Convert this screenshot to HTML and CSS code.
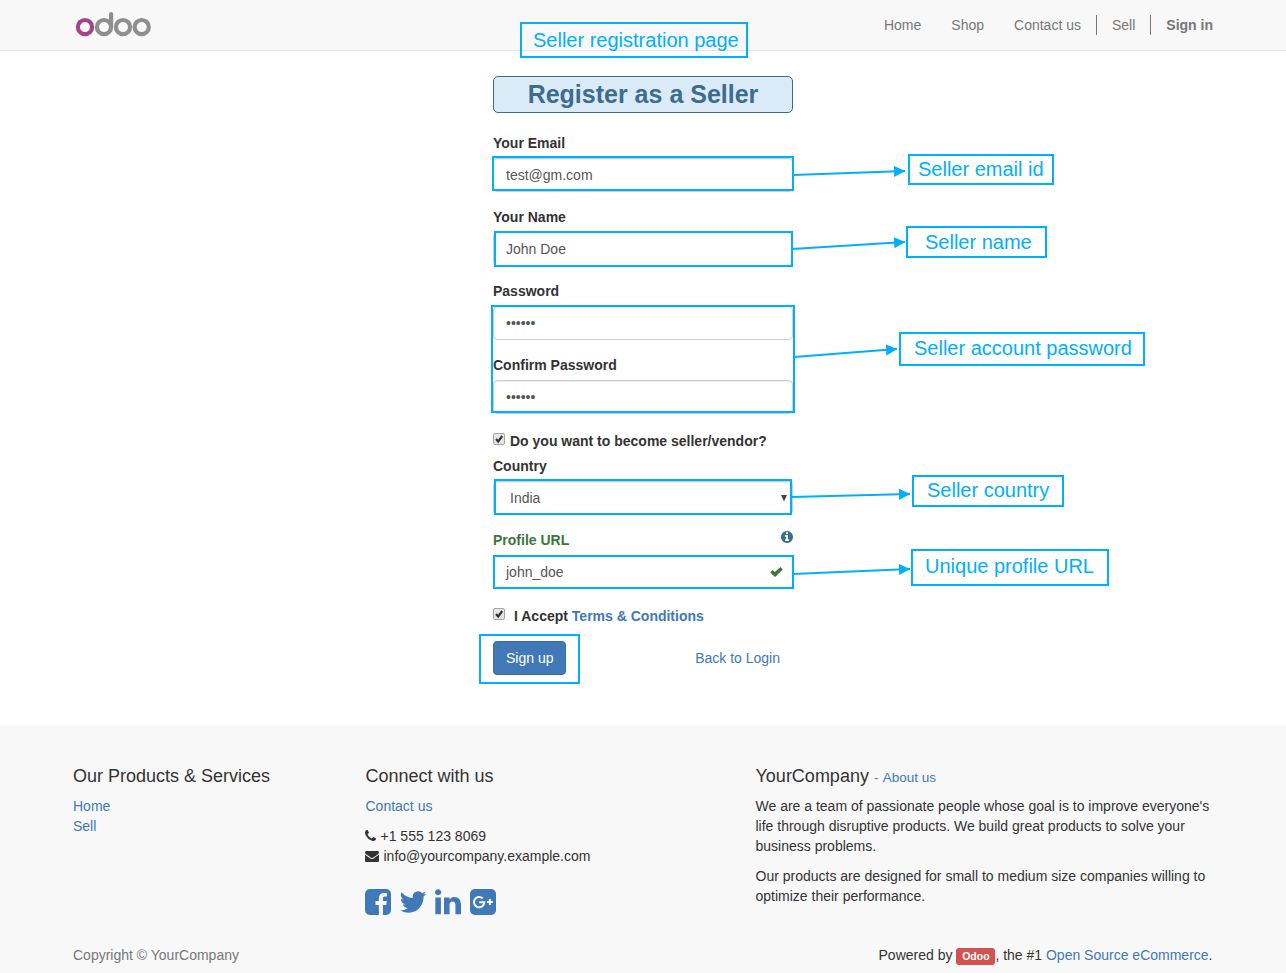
FILE: index.html
```html
<!DOCTYPE html>
<html lang="en">
<head>
<meta charset="utf-8">
<title>Register as a Seller</title>
<link rel="stylesheet" href="styles.css">
</head>
<body>
<header class="navbar">
  <div class="container navbar-inner">
    <a class="brand" href="#" aria-label="odoo">
      <svg width="80" height="30" viewBox="73 9 80 30" fill="none" stroke-width="4.2">
        <g stroke="#8f8f8f">
          <circle cx="104" cy="27.1" r="7.1"/>
          <path d="M111.1 14.1V27" stroke-linecap="round"/>
          <circle cx="123" cy="27.1" r="7.1"/>
          <circle cx="141.7" cy="27.1" r="7.1"/>
        </g>
        <circle cx="85" cy="27.1" r="7.1" stroke="#a24689"/>
      </svg>
    </a>
    <nav class="menu">
      <a href="#">Home</a>
      <a href="#">Shop</a>
      <a href="#">Contact us</a>
      <a class="divided" href="#">Sell</a>
      <a class="divided strong" href="#">Sign in</a>
    </nav>
  </div>
</header>

<main class="main">
  <form class="signup">
    <h1 class="title">Register as a Seller</h1>
    <div class="group"><label>Your Email</label><div class="control">test@gm.com</div></div>
    <div class="group"><label>Your Name</label><div class="control">John Doe</div></div>
    <div class="group"><label>Password</label><div class="control">••••••</div></div>
    <div class="group"><label>Confirm Password</label><div class="control">••••••</div></div>
    <div class="check seller">
      <svg class="box" viewBox="0 0 12 12"><rect class="box-frame" x=".5" y=".5" width="11" height="11" rx="1.5"/><path d="M3 6l2.2 2.4L9.2 3" /></svg>
      <label>Do you want to become seller/vendor?</label>
    </div>
    <div class="group">
      <label>Country</label>
      <div class="control select"><span>India</span><svg width="6" height="7" viewBox="0 0 6 7"><path d="M0 0h6L3 6.5z" fill="#444"/></svg></div>
    </div>
    <div class="group">
      <div class="label-row">
        <label class="valid">Profile URL</label>
        <svg class="info" viewBox="128 128 1536 1536"><path d="M1152 1376v-160q0-14-9-23t-23-9h-96v-512q0-14-9-23t-23-9h-320q-14 0-23 9t-9 23v160q0 14 9 23t23 9h96v320h-96q-14 0-23 9t-9 23v160q0 14 9 23t23 9h448q14 0 23-9t9-23zm-128-896v-160q0-14-9-23t-23-9h-192q-14 0-23 9t-9 23v160q0 14 9 23t23 9h192q14 0 23-9t9-23zm640 416q0 209-103 385.5t-279.5 279.5-385.5 103-385.5-103-279.5-279.5-103-385.5 103-385.5 279.5-279.5 385.5-103 385.5 103 279.5 279.5 103 385.5z"/></svg>
      </div>
      <div class="control url"><span>john_doe</span><svg width="13" height="10" viewBox="0 0 13 10"><path d="M.2 5.5L2.5 3 4.8 5.1 10.5 0 12.8 2.4 5 9.9z" fill="#3c763d"/></svg></div>
    </div>
    <div class="check terms">
      <svg class="box" viewBox="0 0 12 12"><rect class="box-frame" x=".5" y=".5" width="11" height="11" rx="1.5"/><path d="M3 6l2.2 2.4L9.2 3" /></svg>
      <label>I Accept <a href="#">Terms &amp; Conditions</a></label>
    </div>
    <div class="actions">
      <button class="btn" type="button">Sign up</button>
      <a href="#">Back to Login</a>
    </div>
  </form>
</main>

<footer class="footer">
  <div class="container columns">
    <section class="col-products">
      <h4>Our Products &amp; Services</h4>
      <a href="#">Home</a><br><a href="#">Sell</a>
    </section>
    <section class="col-connect">
      <h4>Connect with us</h4>
      <p><a href="#">Contact us</a></p>
      <div class="contact"><svg width="11" height="12" viewBox="192 128 1408 1536"><path d="M1600 1240q0 27-10 70.5t-21 68.5q-21 50-122 106-94 51-186 51-27 0-53-3.5t-57.5-12.5-47-14.5-55.5-20.5-49-18q-98-35-175-83-127-79-264-216t-216-264q-48-77-83-175-3-9-18-49t-20.5-55.5-14.5-47-12.5-57.5-3.5-53q0-92 51-186 56-101 106-122 25-11 68.5-21t70.5-10q14 0 21 3 18 6 53 76 11 19 30 54t35 63.5 31 53.5q3 4 17.5 25t21.5 35.5 7 28.5q0 20-28.5 50t-62 55-62 53-28.5 46q0 9 5 22.5t8.5 20.5 14 24 11.5 19q76 137 174 235t235 174q2 1 19 11.5t24 14 20.5 8.5 22.5 5q18 0 46-28.5t53-62 55-62 50-28.5q14 0 28.5 7t35.5 21.5 25 17.5q25 15 53.5 31t63.5 35 54 30q70 35 76 53 3 7 3 21z"/></svg>+1 555 123 8069</div>
      <div class="contact"><svg width="14" height="12" viewBox="0 128 1792 1536"><path d="M1792 710v794q0 66-47 113t-113 47h-1472q-66 0-113-47t-47-113v-794q44 49 101 87 362 246 497 345 57 42 92.5 65.5t94.5 48 110 24.5h2q51 0 110-24.5t94.5-48 92.5-65.5q170-123 498-345 57-39 100-87zm0-294q0 79-49 151t-122 123q-376 261-468 325-10 7-42.5 31t-54 38.5-52 32.5-57.5 27-50 9h-2q-23 0-50-9t-57.5-27-52-32.5-54-38.5-42.5-31q-91-64-262-182.5t-205-142.5q-62-42-117-115.5t-55-136.5q0-78 41.5-130t118.5-52h1472q65 0 112.5 47t47.5 113z"/></svg>info@yourcompany.example.com</div>
      <div class="social">
        <svg width="26" height="26" viewBox="128 128 1536 1536"><path d="M1376 128q119 0 203.5 84.5t84.5 203.5v960q0 119-84.5 203.5t-203.5 84.5h-188v-595h199l30-232h-229v-148q0-56 23.5-84t91.5-28l122-1v-207q-63-9-178-9-136 0-217.5 80t-81.5 226v171h-200v232h200v595h-532q-119 0-203.5-84.5t-84.5-203.5v-960q0-119 84.5-203.5t203.5-84.5h960z"/></svg>
        <svg width="28" height="26" viewBox="64 128 1664 1536"><path d="M1684 408q-67 98-162 167 1 14 1 42 0 130-38 259.5t-115.5 248.5-184.5 210.5-258 146-323 54.5q-271 0-496-145 35 4 78 4 225 0 401-138-105-2-188-64.5t-114-159.5q33 5 61 5 43 0 85-11-112-23-185.5-111.5t-73.5-205.5v-4q68 38 146 41-66-44-105-115t-39-154q0-88 44-163 121 149 294.5 238.5t371.5 99.5q-8-38-8-74 0-134 94.5-228.5t228.5-94.5q140 0 236 102 109-21 205-78-37 115-142 178 93-10 186-50z"/></svg>
        <svg width="26" height="26" viewBox="128 128 1536 1536"><path d="M477 625v991h-330v-991h330zm21-306q1 73-50.5 122t-135.5 49h-2q-82 0-132-49t-50-122q0-74 51.5-122.5t134.5-48.5 133 48.5 51 122.5zm1166 729v568h-329v-530q0-105-40.5-164.5t-126.5-59.5q-63 0-105.5 34.5t-63.5 85.5q-11 30-11 81v553h-329q2-399 2-647t-1-296l-1-48h329v144h-2q20-32 41-56t56.5-52 87-43.5 114.5-15.5q171 0 275 113.5t104 332.5z"/></svg>
        <svg width="26" height="26" viewBox="0 0 25.7 25.7"><rect width="25.7" height="25.7" rx="4.8"/><path d="M12.5 9.3A5.1 5.1 0 1 0 14.1 13H9.1M16.8 12.9h5.8M19.7 10v5.8" fill="none" stroke="#f8f8f8" stroke-width="2"/></svg>
      </div>
    </section>
    <section class="col-about">
      <h4>YourCompany <small>- <a href="#">About us</a></small></h4>
      <p>We are a team of passionate people whose goal is to improve everyone's life through disruptive products. We build great products to solve your business problems.</p>
      <p>Our products are designed for small to medium size companies willing to optimize their performance.</p>
    </section>
  </div>
  <div class="container bottom">
    <span class="copyright">Copyright © YourCompany</span>
    <span class="powered">Powered by <a class="badge" href="#">Odoo</a>, the #1 <a href="#">Open Source eCommerce</a>.</span>
  </div>
</footer>

<div class="callouts">
  <svg class="arrows" width="1286" height="973" viewBox="0 0 1286 973">
    <defs><marker id="head" markerUnits="userSpaceOnUse" markerWidth="12" markerHeight="12" refX="11" refY="6" orient="auto"><path d="M0 .4L11.2 6 0 11.6z" fill="#00b0fb"/></marker></defs>
    <g stroke="#00b0fb" stroke-width="2" marker-end="url(#head)">
      <path d="M793 175L905 171"/>
      <path d="M792 249L905 242"/>
      <path d="M794 357L897 349"/>
      <path d="M791 497L910 494"/>
      <path d="M793 574L910 569"/>
    </g>
  </svg>
  <div class="frame frame-email"></div>
  <div class="frame frame-name"></div>
  <div class="frame frame-password"></div>
  <div class="frame frame-country"></div>
  <div class="frame frame-url"></div>
  <div class="frame frame-submit"></div>
  <div class="frame note-page">Seller registration page</div>
  <div class="frame note-email">Seller email id</div>
  <div class="frame note-name">Seller name</div>
  <div class="frame note-password">Seller account password</div>
  <div class="frame note-country">Seller country</div>
  <div class="frame note-url">Unique profile URL</div>
</div>
</body>
</html>
```
FILE: styles.css
```css
* { box-sizing: border-box; }
body {
  position: relative;
  margin: 0;
  height: 973px;
  overflow: hidden;
  font: 14px/20px "Liberation Sans", Arial, sans-serif;
  color: #333;
  background: #fff;
}
a { color: #4078b8; text-decoration: none; }
svg { display: block; flex: none; }
.container { width: 1140px; margin: 0 auto; }

.navbar { height: 51px; background: #f8f8f8; border-bottom: 1px solid #e7e7e7; }
.navbar-inner { display: flex; justify-content: space-between; }
.brand { padding-top: 9px; }
.menu { display: flex; align-items: flex-start; padding-top: 15px; margin-right: -15px; }
.menu a { padding: 0 15px; color: #777; }
.menu .divided { border-left: 1px solid #777; }
.menu .strong { font-weight: bold; }

.main { height: 674px; padding-top: 25px; }
.signup { width: 300px; margin: 0 auto; }
.title {
  height: 37px;
  margin: 0 0 20px;
  border: 1px solid #3a6d90;
  border-radius: 5px;
  background: #daebf7;
  color: #3a6d90;
  font-size: 25px;
  line-height: 35px;
  text-align: center;
}
.group { margin-bottom: 15px; }
label { display: block; font-weight: bold; }
.group label { margin-bottom: 5px; }
.control {
  height: 34px;
  padding: 6px 12px;
  border: 1px solid #ccc;
  border-radius: 4px;
  box-shadow: inset 0 1px 1px rgba(0, 0, 0, .075);
  color: #555;
}
.select, .url, .label-row { display: flex; justify-content: space-between; }
.select { align-items: center; padding: 6px 5px 6px 16px; }
.url { align-items: center; padding-right: 9px; }
.valid { color: #3c763d; }
.info { width: 12px; height: 12px; margin-top: 1px; fill: #3a6d90; }
.check { display: flex; }
.box { width: 12px; height: 12px; margin-top: 2px; }
.box-frame { fill: #e6e6e6; stroke: #a5a5a5; stroke-width: 1; }
.box path { fill: none; stroke: #333; stroke-width: 2.2; }
.seller { gap: 5px; margin: 17px 0 5px; }
.terms { gap: 9px; margin: 17px 0 15px; }
.actions { display: flex; justify-content: space-between; align-items: center; padding-right: 13px; }
.btn {
  height: 34px;
  padding: 0 12px;
  border: 1px solid #386ca6;
  border-radius: 4px;
  background: #4078b8;
  color: #fff;
  font: inherit;
}

.footer { height: 248px; padding-top: 41px; background: #f8f8f8; }
.columns { display: grid; grid-template-columns: 292.5px 390px 457.5px; height: 179px; }
h4 { margin: 0 0 10px; font-size: 18px; font-weight: normal; line-height: 20px; }
small { font-size: 13.5px; line-height: 1; color: #777; }
small a { margin-left: .5px; }
p { margin: 0 0 10px; }
.contact { display: flex; align-items: center; gap: 4px; }
.contact svg { fill: #333; margin-left: -.5px; margin-right: .5px; }
.social { display: flex; gap: 8.2px; margin: 23px 0 0 -.5px; fill: #4078b8; }
.bottom { display: flex; justify-content: space-between; }
.copyright { color: #777; }
.powered { margin-right: .5px; }
.badge {
  display: inline-block;
  height: 17px;
  padding: 0 5.8px;
  border-radius: 3px;
  background: #d2534f;
  color: #fff;
  font-size: 10.5px;
  font-weight: bold;
  line-height: 17px;
}

/* Callout layer drawn over the page */
.callouts { position: absolute; inset: 0; pointer-events: none; }
.arrows { position: absolute; left: 0; top: 0; }
.frame { position: absolute; border: 2px solid #00b0fb; color: #00b0fb; font-size: 20px; line-height: 24px; white-space: nowrap; }
.frame-email { left: 492px; top: 156px; width: 302px; height: 35px; }
.frame-name { left: 494px; top: 231px; width: 299px; height: 36px; }
.frame-password { left: 491px; top: 305px; width: 304px; height: 108px; }
.frame-country { left: 494px; top: 479px; width: 298px; height: 36px; }
.frame-url { left: 493px; top: 555px; width: 301px; height: 34px; }
.frame-submit { left: 479px; top: 634px; width: 101px; height: 50px; }
.note-page { left: 520px; top: 22px; width: 228px; height: 36px; padding: 4px 0 0 11px; }
.note-email { left: 908px; top: 154px; width: 146px; height: 31px; padding: 1px 0 0 8px; }
.note-name { left: 906px; top: 226px; width: 141px; height: 32px; padding: 2px 0 0 17px; }
.note-password { left: 899px; top: 332px; width: 246px; height: 34px; padding: 2px 0 0 13px; }
.note-country { left: 912px; top: 475px; width: 152px; height: 32px; padding: 1px 0 0 13px; }
.note-url { left: 911px; top: 549px; width: 198px; height: 37px; padding: 3px 0 0 12px; }
```
